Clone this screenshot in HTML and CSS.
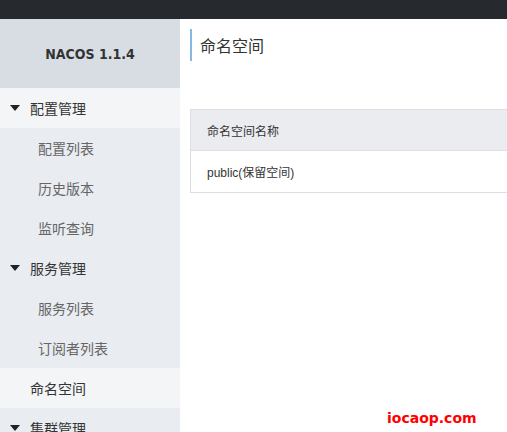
FILE: index.html
```html
<!DOCTYPE html>
<html lang="zh">
<head>
<meta charset="utf-8">
<link rel="stylesheet" href="styles.css">
</head>
<body>
<div class="topbar"></div>
<div class="layout">
  <aside class="sidebar">
    <div class="logo">NACOS 1.1.4</div>
    <div class="group hover"><span class="caret"></span>配置管理</div>
    <div class="item">配置列表</div>
    <div class="item">历史版本</div>
    <div class="item">监听查询</div>
    <div class="group"><span class="caret"></span>服务管理</div>
    <div class="item">服务列表</div>
    <div class="item">订阅者列表</div>
    <div class="group active">命名空间</div>
    <div class="group"><span class="caret"></span>集群管理</div>
  </aside>
  <main class="main">
    <h1 class="title">命名空间</h1>
    <div class="table">
      <div class="thead">命名空间名称</div>
      <div class="trow">public(保留空间)</div>
    </div>
  </main>
</div>
<div class="watermark">iocaop.com</div>
</body>
</html>
```
FILE: styles.css
```css
* { box-sizing: border-box; }
html, body { margin: 0; padding: 0; }
body {
  width: 507px;
  height: 432px;
  overflow: hidden;
  font-family: "Liberation Sans", "Noto Sans CJK SC", sans-serif;
  background: #fff;
  position: relative;
}
.topbar { height: 19px; background: #262a2f; }
.layout { display: flex; }
.sidebar { width: 180px; flex: none; background: #e9ecf1; height: 430px; }
.logo {
  height: 69px;
  background: #d8dde4;
  display: flex; align-items: center; justify-content: center;
  font-weight: bold; color: #333;
  font-family: "DejaVu Sans Condensed", "DejaVu Sans", sans-serif;
  font-stretch: condensed;
  font-size: 14px;
  padding-top: 1px;
}
.group {
  height: 40px; display: flex; align-items: center;
  padding-left: 30px; font-size: 14px; color: #333; position: relative;
}
.group.hover, .group.active { background: #f3f5f7; }
.caret {
  position: absolute; left: 10px; top: 17px;
  width: 0; height: 0;
  border-left: 5px solid transparent; border-right: 5px solid transparent;
  border-top: 6px solid #222;
}
.item {
  height: 40px; display: flex; align-items: center;
  padding-left: 38px; font-size: 14px; color: #666;
}
.main { flex: 1; padding: 10px 0 0 10px; min-width: 0; }
.title {
  margin: 0; height: 32px; border-left: 2px solid #88b7e0;
  padding-left: 8px; font-weight: normal; font-size: 16px; color: #333;
  display: flex; align-items: center;
}
.table { margin-top: 48px; width: 500px; border: 1px solid #dcdee3; }
.thead {
  height: 41px; background: #ebecf0; border-bottom: 1px solid #dcdee3;
  display: flex; align-items: center; padding-left: 16px;
  font-size: 12px; color: #333;
}
.trow {
  height: 41px; display: flex; align-items: center; padding-left: 16px;
  font-size: 12px; color: #333;
}
.watermark {
  position: absolute; left: 387px; top: 410px;
  color: #ff0000; font-size: 14px; font-weight: bold;
  font-family: "DejaVu Sans", sans-serif;
}
```
